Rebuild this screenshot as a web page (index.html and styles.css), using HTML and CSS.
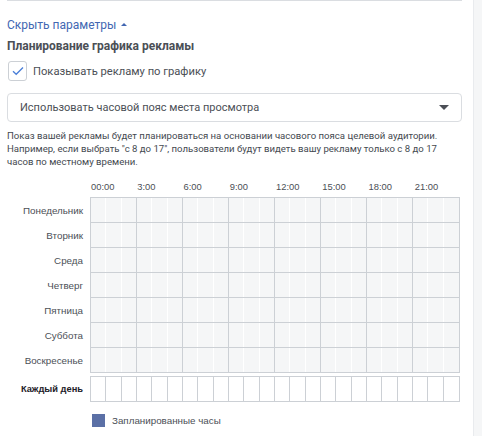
FILE: index.html
```html
<!DOCTYPE html>
<html lang="ru">
<head>
    <meta charset="UTF-8">
    <title>Планирование графика рекламы</title>
    <link rel="stylesheet" href="styles.css">
</head>
<body>
    <div class="page">
        <div class="panel">
            <div class="toggle-link">Скрыть параметры <span class="toggle-arrow"></span></div>
            <div class="section-title">Планирование графика рекламы</div>
            <label class="check-row">
                <span class="checkbox">
                    <svg width="12" height="10" viewBox="0 0 12 10"><path d="M1 5.2 L4.2 8.3 L11 1.5" fill="none" stroke="#4a7fd8" stroke-width="1.3"/></svg>
                </span>
                <span>Показывать рекламу по графику</span>
            </label>
            <div class="select-box">
                <span>Использовать часовой пояс места просмотра</span>
                <span class="select-caret"></span>
            </div>
            <div class="hint">Показ вашей рекламы будет планироваться на основании часового пояса целевой аудитории. Например, если выбрать "с 8 до 17", пользователи будут видеть вашу рекламу только с 8 до 17 часов по местному времени.</div>

            <div class="schedule">
                <div class="hours-row">
                    <span>00:00</span><span>3:00</span><span>6:00</span><span>9:00</span>
                    <span>12:00</span><span>15:00</span><span>18:00</span><span>21:00</span>
                </div>
                <div class="schedule-body">
                    <div class="day-labels">
                        <div>Понедельник</div>
                        <div>Вторник</div>
                        <div>Среда</div>
                        <div>Четверг</div>
                        <div>Пятница</div>
                        <div>Суббота</div>
                        <div>Воскресенье</div>
                    </div>
                    <div class="week-grid" id="weekGrid"></div>
                </div>
                <div class="every-row">
                    <div class="every-label">Каждый день</div>
                    <div class="every-grid" id="everyGrid"></div>
                </div>
                <div class="legend">
                    <span class="legend-box"></span>
                    <span>Запланированные часы</span>
                </div>
            </div>
        </div>
        <div class="side-strip"></div>
    </div>
    <script>
        var weekGrid = document.getElementById('weekGrid');
        for (var d = 0; d < 7; d++) {
            var row = document.createElement('div');
            row.className = 'week-row';
            for (var h = 0; h < 24; h++) {
                var cell = document.createElement('div');
                cell.className = 'week-cell';
                row.appendChild(cell);
            }
            weekGrid.appendChild(row);
        }
        var everyGrid = document.getElementById('everyGrid');
        for (var i = 0; i < 24; i++) {
            var c = document.createElement('div');
            c.className = 'every-cell';
            everyGrid.appendChild(c);
        }
    </script>
</body>
</html>
```

FILE: styles.css
```css
body {
    margin: 0;
    background: #fff;
    font-family: Roboto, "Liberation Sans", Arial, sans-serif;
    color: #4b4f56;
}
.page {
    display: flex;
    height: 436px;
    overflow: hidden;
}
.panel {
    width: 455px;
    margin-left: 7px;
    margin-right: 11px;
    border-top: 1px solid #dadde1;
}
.side-strip {
    width: 8px;
    background: #f5f6f7;
    border-left: 1px solid #e9ebee;
}
.toggle-link {
    margin-top: 17px;
    font-size: 12px;
    line-height: 14px;
    color: #4267b2;
}
.toggle-arrow {
    display: inline-block;
    width: 0;
    height: 0;
    border-left: 3px solid transparent;
    border-right: 3px solid transparent;
    border-bottom: 3px solid #4267b2;
    vertical-align: middle;
    margin-left: 2px;
    margin-bottom: 2px;
}
.section-title {
    margin-top: 7px;
    font-size: 12px;
    line-height: 14px;
    font-weight: bold;
    color: #4b4f56;
}
.check-row {
    display: flex;
    align-items: center;
    margin-top: 8px;
    font-size: 11.2px;
    color: #4b4f56;
}
.checkbox {
    width: 17px;
    height: 18px;
    border: 1px solid #ccd0d5;
    border-radius: 3px;
    display: flex;
    align-items: center;
    justify-content: center;
    margin-left: 1px;
    margin-right: 6px;
}
.select-box {
    margin-top: 12px;
    height: 27px;
    border: 1px solid #dadde1;
    border-radius: 4px;
    display: flex;
    align-items: center;
    justify-content: space-between;
    padding: 0 12px 0 12px;
    font-size: 11px;
    color: #4b4f56;
}
.select-caret {
    width: 0;
    height: 0;
    border-left: 5px solid transparent;
    border-right: 5px solid transparent;
    border-top: 5px solid #4b4f56;
}
.hint {
    margin-top: 7px;
    padding-right: 15px;
    font-size: 9.6px;
    line-height: 13px;
    color: #444950;
}
.schedule {
    font-family: "Liberation Sans", Arial, sans-serif;
    font-size: 9.8px;
    color: #4b4f56;
}
.hours-row {
    display: grid;
    grid-template-columns: repeat(8, 46.25px);
    margin-left: 83px;
    margin-top: 12px;
    line-height: 13px;
    font-size: 9.4px;
}
.hours-row span {
    padding-left: 1px;
}
.schedule-body {
    display: flex;
    margin-top: 4px;
}
.day-labels {
    width: 76px;
    padding-right: 7px;
    text-align: right;
    padding-top: 1px;
}
.day-labels div {
    height: 25px;
    line-height: 25px;
}
.week-grid {
    width: 368px;
    border: 1px solid #ccd0d5;
}
.week-row {
    display: grid;
    grid-template-columns: repeat(24, 1fr);
    height: 24px;
    border-top: 1px solid #ccd0d5;
}
.week-row:first-child {
    border-top: none;
}
.week-cell {
    background: #f5f6f7;
    border-right: 1px solid #fff;
}
.week-cell:nth-child(3n) {
    border-right-color: #ccd0d5;
}
.week-cell:last-child {
    border-right: none;
}
.every-row {
    display: flex;
    align-items: center;
    margin-top: 3px;
}
.every-label {
    width: 76px;
    padding-right: 7px;
    text-align: right;
    font-weight: bold;
    font-size: 9.3px;
    color: #1d2129;
}
.every-grid {
    width: 368px;
    height: 24px;
    border: 1px solid #ccd0d5;
    display: grid;
    grid-template-columns: repeat(24, 1fr);
}
.every-cell {
    border-right: 1px solid #ccd0d5;
}
.every-cell:last-child {
    border-right: none;
}
.legend {
    display: flex;
    align-items: center;
    margin-left: 85px;
    margin-top: 12px;
}
.legend-box {
    width: 13px;
    height: 13px;
    background: #5b70a6;
    margin-right: 7px;
}
```
